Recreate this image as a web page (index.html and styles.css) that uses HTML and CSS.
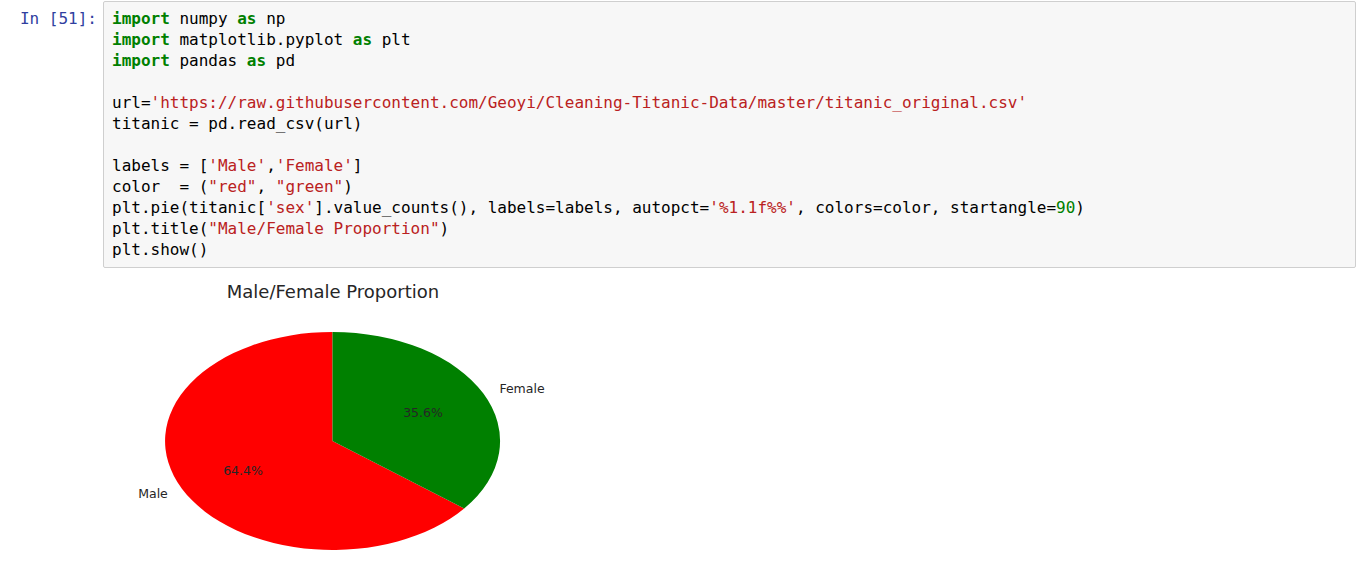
FILE: index.html
```html
<!DOCTYPE html>
<html>
<head>
<meta charset="utf-8">
<link rel="stylesheet" href="styles.css">
</head>
<body>
<div class="cell">
  <div class="row">
    <div class="prompt">In&nbsp;[51]:</div>
    <div class="input"><pre class="code"><span class="kw">import</span> numpy <span class="kw">as</span> np
<span class="kw">import</span> matplotlib.pyplot <span class="kw">as</span> plt
<span class="kw">import</span> pandas <span class="kw">as</span> pd

url=<span class="s">'https://raw.githubusercontent.com/Geoyi/Cleaning-Titanic-Data/master/titanic_original.csv'</span>
titanic = pd.read_csv(url)

labels = [<span class="s">'Male'</span>,<span class="s">'Female'</span>]
color  = (<span class="s">"red"</span>, <span class="s">"green"</span>)
plt.pie(titanic[<span class="s">'sex'</span>].value_counts(), labels=labels, autopct=<span class="s">'%1.1f%%'</span>, colors=color, startangle=<span class="n">90</span>)
plt.title(<span class="s">"Male/Female Proportion"</span>)
plt.show()</pre></div>
  </div>
  <div class="row">
    <div class="prompt"></div>
    <div class="output">
      <svg class="chart" width="460" height="294" viewBox="103 270 460 294" xmlns="http://www.w3.org/2000/svg">
        <text x="333" y="298" text-anchor="middle" class="title">Male/Female Proportion</text>
        <path d="M332.5,441 L332.5,332 A167.5,109 0 1,0 464.2,508.4 Z" fill="#ff0000"/>
        <path d="M332.5,441 L464.2,508.4 A167.5,109 0 0,0 332.5,332 Z" fill="#008000"/>
        <text x="522" y="393" text-anchor="middle" class="lbl">Female</text>
        <text x="153" y="498" text-anchor="middle" class="lbl">Male</text>
        <text x="423" y="417" text-anchor="middle" class="lbl">35.6%</text>
        <text x="243" y="475" text-anchor="middle" class="lbl">64.4%</text>
      </svg>
    </div>
  </div>
</div>
</body>
</html>
```

FILE: styles.css
```css
html, body {
  margin: 0;
  padding: 0;
  background: #ffffff;
}
.cell {
  display: flex;
  flex-direction: column;
  padding: 1px 12px 0 0;
}
.row {
  display: flex;
  flex-direction: row;
}
.prompt {
  flex: 0 0 103px;
  width: 103px;
  padding-right: 6px;
  padding-top: 7px;
  box-sizing: border-box;
  text-align: right;
  font-family: "DejaVu Sans Mono", monospace;
  font-size: 16px;
  line-height: 21px;
  color: #303f9f;
}
.input {
  flex: 1;
  background: #f7f7f7;
  border: 1px solid #cfcfcf;
  border-radius: 2px;
  height: 267px;
  box-sizing: border-box;
}
.code {
  margin: 0;
  padding: 6px 8px 8px 8px;
  font-family: "DejaVu Sans Mono", monospace;
  font-size: 16px;
  line-height: 21px;
  color: #000000;
  white-space: pre;
}
.kw {
  color: #008000;
  font-weight: bold;
}
.s {
  color: #ba2121;
}
.n {
  color: #008000;
}
.output {
  flex: 1;
  margin-top: 2px;
}
.chart {
  display: block;
}
.title {
  font-family: "DejaVu Sans", sans-serif;
  font-size: 18px;
  fill: #262626;
}
.lbl {
  font-family: "DejaVu Sans", sans-serif;
  font-size: 12.5px;
  fill: #262626;
}
```
